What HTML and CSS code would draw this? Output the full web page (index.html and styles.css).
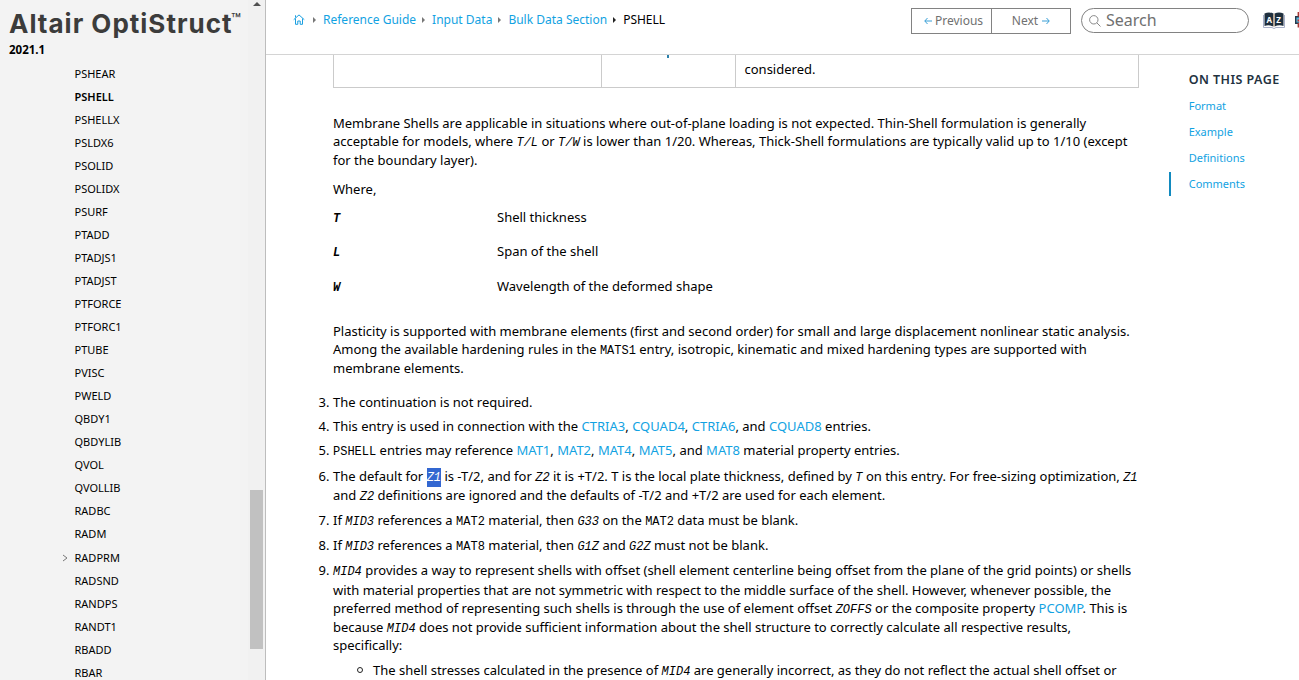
FILE: index.html
```html
<!DOCTYPE html>
<html lang="en">
<head>
<meta charset="utf-8">
<title>PSHELL</title>
<link rel="stylesheet" href="styles.css">
</head>
<body>
<div class="app">
  <aside class="sidebar">
    <div class="nav">
      <div class="brand"><span class="brand-name">Altair OptiStruct</span><span class="tm">™</span></div>
      <div class="version">2021.1</div>
      <ul class="tree">
        <li>PSHEAR</li><li class="current">PSHELL</li><li>PSHELLX</li><li>PSLDX6</li><li>PSOLID</li><li>PSOLIDX</li><li>PSURF</li><li>PTADD</li><li>PTADJS1</li><li>PTADJST</li><li>PTFORCE</li><li>PTFORC1</li><li>PTUBE</li><li>PVISC</li><li>PWELD</li><li>QBDY1</li><li>QBDYLIB</li><li>QVOL</li><li>QVOLLIB</li><li>RADBC</li><li>RADM</li>
        <li class="parent"><svg class="chevron" width="6" height="8" viewBox="0 0 6 8"><path d="M1 1l4 3-4 3" fill="none" stroke="#777"/></svg>RADPRM</li>
        <li>RADSND</li><li>RANDPS</li><li>RANDT1</li><li>RBADD</li><li>RBAR</li>
      </ul>
    </div>
    <div class="scrollbar">
      <svg class="up" width="8" height="4" viewBox="0 0 8 4"><path d="M0 4l4-4 4 4z" fill="#505050"/></svg>
      <div class="thumb"></div>
    </div>
  </aside>
  <div class="main">
    <header class="header">
      <nav class="crumbs">
        <svg class="home" width="12" height="11" viewBox="0 0 12 11"><path d="M.7 5.700L6 .9l5.300 4.800M2.500 3.500V1.300M2.500 4.500v5.800h2.300V7h2.400v3.300h2.300V4.500" fill="none" stroke="#1b9fe0"/></svg>
        <i class="sep s1"></i><a>Reference Guide</a>
        <i class="sep"></i><a>Input Data</a>
        <i class="sep"></i><a>Bulk Data Section</a>
        <i class="sep dark"></i><span>PSHELL</span>
      </nav>
      <div class="tools">
        <div class="pager">
          <div class="prev"><svg width="8" height="8" viewBox="0 0 8 8"><path d="M8 4H.8M3.500 1L.8 4l2.700 3" fill="none" stroke="#3a9fd6"/></svg><span>Previous</span></div>
          <div class="next"><span>Next</span><svg width="8" height="8" viewBox="0 0 8 8"><path d="M0 4h7.200M4.500 1l2.700 3-2.700 3" fill="none" stroke="#3a9fd6"/></svg></div>
        </div>
        <div class="search"><svg width="12" height="12" viewBox="0 0 12 12"><g fill="none" stroke="#888"><circle cx="4.800" cy="4.800" r="4.200"/><path d="M7.800 7.800l3.700 3.700"/></g></svg><span>Search</span></div>
        <svg class="book" width="22" height="17" viewBox="0 0 22 17">
          <path d="M.5 3v12.500h8.500l2 1 2-1h8.500V3" fill="none" stroke="#a9b0c8"/>
          <path d="M1.500 1.500Q6-.5 10.500 1.500v13Q6 12.500 1.500 14zM11.500 1.500Q16-.5 20.500 1.500V14q-4.500-1.500-9 .5z" fill="#1f2f3e"/>
          <path d="M11 2v12.500" stroke="#d8b48e"/>
          <text x="3.400" y="10.800" class="book-text">A</text><text x="13.300" y="10.800" class="book-text">Z</text>
        </svg>
        <svg class="print" width="4" height="16" viewBox="0 0 4 16"><path d="M4 4.700H.7v6.600H4" fill="#55b6dd" stroke="#26394a" stroke-width="1.400"/><path d="M3.300 0v4.500M3.300 11v4.500" stroke="#a83a35" stroke-width="1.400"/><path d="M2.500 8.500H4" stroke="#c43a30" stroke-width="2"/></svg>
      </div>
    </header>
    <div class="body">
      <main class="article">
        <div class="table"><div></div><div class="cut"><i></i></div><div class="cell">considered.</div></div>
        <p class="p1">Membrane Shells are applicable in situations where out-of-plane loading is not expected. Thin-Shell formulation is generally<br>acceptable for models, where <em>T/L</em> or <em>T/W</em> is lower than 1/20. Whereas, Thick-Shell formulations are typically valid up to 1/10 (except<br>for the boundary layer).</p>
        <p class="where">Where,</p>
        <dl class="defs">
          <dt>T</dt><dd>Shell thickness</dd>
          <dt>L</dt><dd>Span of the shell</dd>
          <dt>W</dt><dd>Wavelength of the deformed shape</dd>
        </dl>
        <p class="p2">Plasticity is supported with membrane elements (first and second order) for small and large displacement nonlinear static analysis.<br>Among the available hardening rules in the <code>MATS1</code> entry, isotropic, kinematic and mixed hardening types are supported with<br>membrane elements.</p>
        <div class="item i3"><b>3.</b>The continuation is not required.</div>
        <div class="item i4"><b>4.</b>This entry is used in connection with the <a>CTRIA3</a>, <a>CQUAD4</a>, <a>CTRIA6</a>, and <a>CQUAD8</a> entries.</div>
        <div class="item i5"><b>5.</b><code>PSHELL</code> entries may reference <a>MAT1</a>, <a>MAT2</a>, <a>MAT4</a>, <a>MAT5</a>, and <a>MAT8</a> material property entries.</div>
        <div class="item i6"><b>6.</b>The default for <em class="sel">Z1</em> is -T/2, and for <em>Z2</em> it is +T/2. T is the local plate thickness, defined by <em>T</em> on this entry. For free-sizing optimization, <em>Z1</em><br>and <em>Z2</em> definitions are ignored and the defaults of -T/2 and +T/2 are used for each element.</div>
        <div class="item i7"><b>7.</b>If <em>MID3</em> references a <code>MAT2</code> material, then <em>G33</em> on the <code>MAT2</code> data must be blank.</div>
        <div class="item i8"><b>8.</b>If <em>MID3</em> references a <code>MAT8</code> material, then <em>G1Z</em> and <em>G2Z</em> must not be blank.</div>
        <div class="item i9"><b>9.</b><div class="lead"><em>MID4</em> provides a way to represent shells with offset (shell element centerline being offset from the plane of the grid points) or shells</div>with material properties that are not symmetric with respect to the middle surface of the shell. However, whenever possible, the<br>preferred method of representing such shells is through the use of element offset <em>ZOFFS</em> or the composite property <a>PCOMP</a>. This is<br>because <em>MID4</em> does not provide sufficient information about the shell structure to correctly calculate all respective results,<br>specifically:</div>
        <div class="sub"><i class="ring"></i><span>The shell stresses calculated in the presence of <em>MID4</em> are generally incorrect, as they do not reflect the actual shell offset or</span></div>
      </main>
      <aside class="toc">
        <h2>ON THIS PAGE</h2>
        <a>Format</a><a>Example</a><a>Definitions</a><a class="active">Comments</a>
      </aside>
    </div>
  </div>
</div>
</body>
</html>
```
FILE: styles.css
```css
* { box-sizing: border-box; }
body { margin: 0; background: #fff; color: #000; font: 13px/18.5px "Noto Sans", sans-serif; }
.app { display: flex; width: 1299px; height: 680px; overflow: hidden; }
.sidebar { display: flex; width: 266px; flex: none; background: #f3f3f3; border-right: 1px solid #bdbdbd; }
.nav { width: 248px; white-space: nowrap; }
.brand { display: flex; height: 40px; padding: 7px 0 0 9px; color: #3c3c3b; }
.brand-name { width: 222px; font: 700 26px/34px "Inter", sans-serif; letter-spacing: 1px; }
.tm { font: 500 16px/24px "Inter", sans-serif; }
.version { height: 22px; padding-left: 9px; font-size: 11.500px; font-weight: 700; line-height: 19px; }
.tree { list-style: none; margin: 0; padding: 0 0 0 74.500px; font-size: 11px; }
.tree li { height: 23px; line-height: 23px; }
.tree .current { font-weight: 600; }
.tree .parent { display: flex; align-items: center; height: 24px; padding-top: 1px; margin-left: -13px; }
.chevron { margin-right: 7px; }
.scrollbar { width: 17px; background: #f1f1f1; padding: 2px 3px 0 2px; }
.up { display: block; margin-left: 3px; }
.thumb { width: 13px; height: 159px; margin-top: 484px; background: #c1c1c1; }
.main { width: 1033px; flex: none; }
.header { display: flex; height: 55px; border-bottom: 1px solid #d4d4d4; justify-content: space-between; overflow: hidden; }
.crumbs { display: flex; align-items: center; height: 22px; margin: 9px 0 0 27px; font-size: 12px; white-space: nowrap; }
.home { margin-top: -2px; }
a { color: #12a2e2; text-decoration: none; }
.sep { width: 0; height: 0; border: 3px solid transparent; border-left: 3px solid #777; border-right: 0; margin: -1px 7px 0 6px; }
.sep.s1 { margin-left: 8px; }
.sep.dark { border-left-color: #222; }
.tools { display: flex; }
.pager { display: grid; grid-template-columns: 80px 78px; width: 160px; height: 26px; margin-top: 8px; border: 1px solid #828282; color: #707070; font-size: 12px; }
.pager div { display: flex; align-items: center; justify-content: center; gap: 3px; }
.pager .prev { border-right: 1px solid #828282; padding-left: 4px; }
.pager .next { gap: 4px; }
.search { display: flex; align-items: center; gap: 5px; width: 168px; height: 25px; margin: 8px 0 0 10px; padding-left: 7px; border: 1px solid #828282; border-radius: 13px; color: #707070; font-size: 16px; }
.book { margin: 12px 0 0 14px; }
.book-text { font: 700 8px "Noto Sans", sans-serif; fill: #fff; }
.print { margin: 12px 0 0 10px; }
.body { display: flex; height: 625px; overflow: hidden; }
.article { width: 806px; flex: none; margin-left: 67px; white-space: nowrap; }
.table { display: grid; grid-template-columns: 267px 134px 403px; height: 33px; border: 1px solid #cbcbcb; border-top: 0; }
.table > div + div { border-left: 1px solid #cbcbcb; }
.cut i { display: block; width: 2px; height: 3px; margin-left: 65px; background: #2b80ab; }
.cell { padding: 5px 0 0 8.500px; }
p, dl, dd { margin: 0; }
.p1 { margin-top: 25.600px; }
.where { margin-top: 10.900px; height: 20px; }
.defs { display: grid; grid-template-columns: 164px 1fr; grid-template-rows: 34px 35px 34.500px; line-height: 34px; }
em, code, dt { font-family: "Liberation Mono", monospace; font-size: 12px; line-height: 1; }
dt { font-style: oblique; font-weight: 700; line-height: 38px; }
.p2 { margin-top: 18.500px; }
.item > b { float: left; width: 14.500px; margin-left: -14.500px; font-weight: 400; }
.i3 { margin-top: 15.500px; }
.i4, .i5 { margin-top: 5.500px; }
.i6 { margin-top: 8px; }
.i7, .i8, .i9 { margin-top: 6.500px; }
.lead { padding-bottom: 1.500px; }
.sel { background: #3367d1; color: #fff; padding: 3px 0 2px; }
.sub { display: flex; align-items: center; margin-top: 6px; padding-left: 24px; }
.ring { width: 6px; height: 6px; margin-right: 10px; border: 1px solid #222; border-radius: 50%; }
.toc { width: 130px; margin-left: 30px; padding-top: 15px; font-size: 11px; }
.toc h2 { margin: 0 0 5px; padding-left: 19.700px; color: #23323f; font-size: 12.500px; font-weight: 600; line-height: 19px; letter-spacing: .45px; }
.toc a { display: block; height: 24px; margin-bottom: 2px; padding-left: 19.700px; line-height: 23px; }
.toc .active { border-left: 2px solid #128abf; padding-left: 17.700px; }
```
